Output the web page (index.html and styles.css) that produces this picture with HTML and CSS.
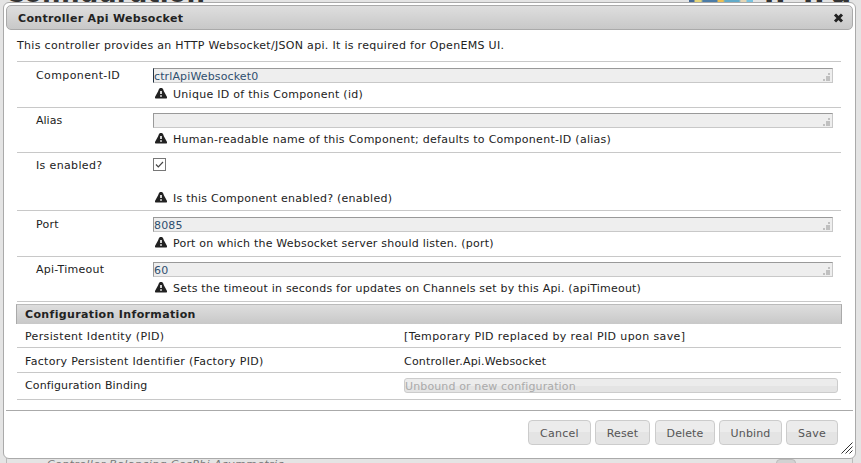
FILE: index.html
```
<!DOCTYPE html>
<html lang="en">
<head>
<meta charset="utf-8">
<title>Controller Api Websocket</title>
<link rel="stylesheet" href="styles.css">
</head>
<body>
<svg width="0" height="0" class="defs" aria-hidden="true">
  <symbol id="warn" viewBox="0 0 12 11"><path d="M5 0h2l1 1 1 2.500 2.500 4.500.5 1v1l-.5.500h-11L0 10V9l.5-1L3 3.500 4 1z" fill="#222"/><path d="M5.200 3h1.600v3H5.200zM5.200 7.300h1.600v1.500H5.200z" fill="#fff"/></symbol>
  <symbol id="grip" viewBox="0 0 8 8"><path d="M5 0h2v2H5zM3 3h4v2H3zM0 6h2v2H0zM3 5h4v3H3z" fill="#c0c0c0"/></symbol>
</svg>
<div class="heading">Configuration</div>
<div class="logo"></div>
<div class="brand"><span>n</span><span>n</span><span>a</span></div>
<div class="behind"><span>Controller Balancing CosPhi Asymmetric</span><i></i></div>
<main class="dialog">
  <header class="titlebar"><span class="s33">Controller Api Websocket</span>
    <svg width="11" height="10" viewBox="0 0 11 10"><path d="M2 1.500l7 7M9 1.500l-7 7" stroke="#222" stroke-width="3"/></svg>
  </header>
  <section class="content">
    <p class="intro s31">This controller provides an HTTP Websocket/JSON api. It is required for OpenEMS UI.</p>
    <div class="row tall"><label class="s39">Component-ID</label><div><div class="field caret"><span class="s13">ctrlApiWebsocket0</span><svg><use href="#grip"/></svg></div><p class="hint"><svg><use href="#warn"/></svg><span class="s28">Unique ID of this Component (id)</span></p></div></div>
    <div class="row"><label>Alias</label><div><div class="field"><span></span><svg><use href="#grip"/></svg></div><p class="hint"><svg><use href="#warn"/></svg><span class="s28">Human-readable name of this Component; defaults to Component-ID (alias)</span></p></div></div>
    <div class="row check"><label class="s36">Is enabled?</label><div><div class="box"><svg width="11" height="11" viewBox="0 0 11 11"><path d="M2 5.500l2.300 2.300L9 3" fill="none" stroke="#444" stroke-width="1.200"/></svg></div><p class="hint"><svg><use href="#warn"/></svg><span class="s26">Is this Component enabled? (enabled)</span></p></div></div>
    <div class="row tall"><label class="s26">Port</label><div><div class="field"><span class="s13">8085</span><svg><use href="#grip"/></svg></div><p class="hint"><svg><use href="#warn"/></svg><span class="s21">Port on which the Websocket server should listen. (port)</span></p></div></div>
    <div class="row"><label class="s26">Api-Timeout</label><div><div class="field"><span class="s13">60</span><svg><use href="#grip"/></svg></div><p class="hint"><svg><use href="#warn"/></svg><span class="s21">Sets the timeout in seconds for updates on Channels set by this Api. (apiTimeout)</span></p></div></div>
    <div class="end"></div>
    <h2><span class="s36">Configuration Information</span></h2>
    <div class="info i1"><span class="s36">Persistent Identity (PID)</span><span class="s39">[Temporary PID replaced by real PID upon save]</span></div>
    <div class="info i2"><span class="s31">Factory Persistent Identifier (Factory PID)</span><span class="s21">Controller.Api.Websocket</span></div>
    <div class="info i3"><span class="s13">Configuration Binding</span><div class="binding"><span class="s13">Unbound or new configuration</span></div></div>
  </section>
  <footer>
    <button class="b1 s26">Cancel</button><button class="b2 s13">Reset</button><button class="b3 s13">Delete</button><button class="b4 s13">Unbind</button><button class="b5 s26">Save</button>
    <svg class="resize" width="12" height="12" viewBox="0 0 12 12"><path d="M.5 11.500l11-11M4.500 11.500l7-7M8.500 11.500l3-3" stroke="#333" stroke-width="1"/></svg>
  </footer>
</main>
</body>
</html>
```
FILE: styles.css
```
* { box-sizing: border-box; }
body { margin: 0; width: 861px; height: 463px; overflow: hidden; position: relative; background: #e4e4e4; color: #222; font: 11px/14px "DejaVu Sans", sans-serif; padding: 2px 5px 4px 3px; }
p, h2 { margin: 0; }
.s13 { letter-spacing: .13px; }
.s21 { letter-spacing: .21px; }
.s26 { letter-spacing: .26px; }
.s28 { letter-spacing: .28px; }
.s31 { letter-spacing: .31px; }
.s33 { letter-spacing: .33px; }
.s36 { letter-spacing: .36px; }
.s39 { letter-spacing: .39px; }
.defs { position: absolute; }
.heading { position: absolute; left: 5px; top: -21px; font: bold 26px/28px "DejaVu Sans", sans-serif; color: #333; }
.logo { position: absolute; left: 689px; top: 0; width: 64px; height: 3px; background: linear-gradient(90deg, #456b98 0 5px, #e5d67a 6px 12px, #4c7ca7 14px 28px, #edbf50 29px 34px, #62abc9 36px 50px, #e4d5b5 52px 57px, #79c3df 58px); }
.brand { position: absolute; left: 764px; top: -21px; font: bold 30px/28px "DejaVu Sans", sans-serif; color: #333; display: flex; }
.brand span { width: 39px; }
.brand span + span { width: 28px; }
.behind { position: absolute; left: 6px; top: 458px; width: 847px; height: 20px; border: solid #bbb; border-width: 0 1px; padding-left: 40px; font-style: italic; letter-spacing: .4px; color: #777; }
.behind i { position: absolute; left: 769px; top: 1px; width: 20px; height: 18px; border: 1px solid #bbb; border-radius: 4px; background: #d2d2d2; }
.dialog { position: relative; width: 853px; height: 457px; background: #fff; border: 1px solid #aaa; border-radius: 6px; padding: 2px; display: flex; flex-direction: column; }
.titlebar { height: 25px; flex: none; border: 1px solid #aaa; border-radius: 5px; background: linear-gradient(#dedede, #c8c8c8); font-weight: bold; display: flex; justify-content: space-between; align-items: center; padding: 2px 8px 0 11px; }
.titlebar svg { margin-bottom: 2px; }
.content { height: 380px; flex: none; padding: 9px 11px 0 10px; }
.intro { height: 22px; margin-left: 1px; }
.row { margin: 0 1px 0 1px; height: 45px; border-top: 1px solid #c8c8c8; padding-top: 5px; display: grid; grid-template-columns: 117px 680px; padding-left: 19px; }
.row label { padding-top: 1px; }
.row.tall { height: 46px; padding-top: 6px; }
.row.check { height: 58px; }
.field { height: 15px; background: #eee; border: 1px solid #c8c8c8; border-top-color: #999; border-left-color: #999; color: #2e4f6e; display: flex; justify-content: space-between; align-items: center; }
.field span { padding-top: 2px; }
.field svg { width: 8px; height: 8px; margin: 3px 1px 0 0; }
.caret { border-left: 1px solid #234; }
.hint { display: flex; align-items: center; gap: 6px; padding-left: 2px; margin-top: 5px; }
.hint svg { width: 12px; height: 11px; margin-bottom: 3px; }
.box { width: 13px; height: 13px; border: 1px solid #777; background: #fff; display: flex; }
.check .hint { margin-top: 21px; }
.end { height: 3px; margin: 0 1px; border-top: 1px solid #c8c8c8; }
h2 { height: 20px; border: 1px solid #aaa; border-bottom: 0; border-top-color: #bbb; background: linear-gradient(#dedede, #c8c8c8); font: bold 11px/19px "DejaVu Sans", sans-serif; padding-left: 8px; }
.info { margin: 0 1px; padding-left: 8px; display: grid; grid-template-columns: 379px 434px; border-bottom: 1px solid #c8c8c8; }
.i1 { height: 24px; padding-top: 6px; }
.i2 { height: 25px; padding-top: 7px; }
.i3 { height: 27px; padding-top: 5px; }
.i3 > span { padding-top: 1px; }
.binding { height: 15px; border: 1px solid #ccc; border-radius: 3px; background: linear-gradient(#ececec 50%, #e4e4e4 50%); color: #aaa; line-height: 15px; }
footer { flex: none; height: 46px; border-top: 1px solid #aaa; display: flex; padding: 9px 15px 0 0; justify-content: flex-end; position: relative; }
button { height: 25px; padding: 2px 0 0; border: 1px solid #ccc; border-radius: 4px; background: linear-gradient(#ececec 50%, #e4e4e4 50%); color: #555; font: 11px/21px "DejaVu Sans", sans-serif; }
.b1 { width: 63px; margin-right: 4px; }
.b2 { width: 55px; margin-right: 5px; }
.b3 { width: 60px; margin-right: 4px; }
.b4 { width: 63px; margin-right: 4px; }
.b5 { width: 52px; }
.resize { position: absolute; right: 0; bottom: 2px; }
```
